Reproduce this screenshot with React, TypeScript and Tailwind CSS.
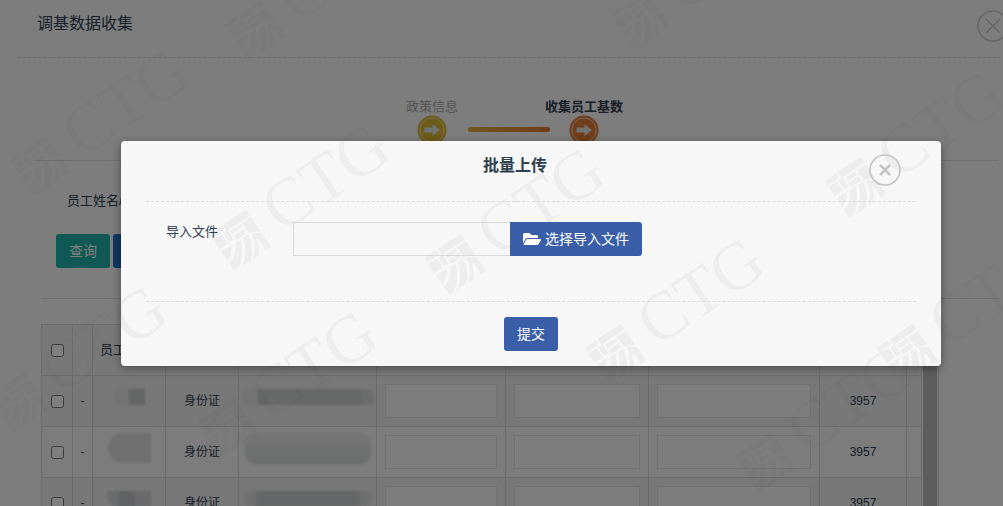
import { FaFolderOpen } from "react-icons/fa";

interface Row {
  name: string[];
  idNumber: string[];
  idType: string;
  base: string;
}

const rows: Row[] = [
  {
    name: ["w-4 h-4 bg-[#e6e6e6] rounded-l-lg", "w-4 h-4 bg-[#c9cacb]"],
    idNumber: ["w-4 h-4 bg-[#e6e6e6] rounded-l-lg", "w-[104px] h-4 bg-[#cfd0d1]", "w-3 h-4 bg-[#dadbdb] rounded-tr-lg"],
    idType: "身份证",
    base: "3957",
  },
  {
    name: ["w-[43px] h-[30px] bg-[#e1e1e1] rounded-l-2xl"],
    idNumber: ["w-[126px] h-8 bg-linear-to-b from-[#eeeeee] via-[#e0e1e1] to-[#dadbdb] rounded-xl"],
    idType: "身份证",
    base: "3957",
  },
  {
    name: ["w-3 h-4 bg-[#d6d6d6] rounded-bl-xl", "w-4 h-4 bg-[#c2c5c8]", "w-4 h-4 bg-[#d4d4d4]"],
    idNumber: ["w-3 h-4 bg-[#e0e0e0] rounded-l-lg", "w-[104px] h-4 bg-[#cbcdce]", "w-3 h-4 bg-[#dedede] rounded-r-lg"],
    idType: "身份证",
    base: "3957",
  },
];

const marks = [
  [240, 240],
  [455, 264],
  [615, 354],
  [855, 187],
  [907, 354],
  [18, 402],
  [228, 427],
  [765, 462],
  [255, 30],
  [40, 165],
  [640, 20],
];

function CloseIcon({ thick }: { thick?: boolean }) {
  return (
    <svg viewBox="0 0 32 32" className="size-8" fill="none" stroke="currentColor">
      <circle cx="16" cy="16" r="15" strokeWidth="1.5" />
      {thick ? (
        <path d="M11 11l10 10M21 11L11 21" strokeWidth="2.5" />
      ) : (
        <path d="M9 9l14 14M23 9L9 23" strokeWidth="1.5" />
      )}
    </svg>
  );
}

function StepIcon({ color }: { color: string }) {
  return (
    <svg viewBox="0 0 30 30" className="size-[30px]">
      <circle cx="15" cy="15" r="14.5" fill={color} />
      <circle cx="15" cy="15" r="12" fill="none" stroke="#e6d9b4" strokeWidth="1" />
      <path d="M7.500 12.500h8V9l7.500 6-7.500 6v-3.500h-8z" fill="#e4e4e4" />
    </svg>
  );
}

function Watermark({ viewBox }: { viewBox?: string }) {
  return (
    <svg
      viewBox={viewBox}
      className={`pointer-events-none absolute inset-0 size-full ${viewBox ? "opacity-[0.035]" : "opacity-[0.014]"}`}
      aria-hidden="true"
    >
      {marks.map(([x, y]) => (
        <g key={`${x}-${y}`} transform={`translate(${x} ${y}) rotate(-34)`}>
          <path d="M-22 -22H-8V-17H-22zM-22 -15H-12V-4H-22zM-10 -15H-5V-4H-10zM-6 -22H22V-15H-6zM-3 -13H9V-9H-3zM-3 -7H9V-2H-3zM11 -13H22V4L11 -1z" />
          <path d="M-22 -1H-9Q-14 7 -22 10zM-6 0H1Q-6 17 -18 23L-22 21V13Q-10 10 -6 0zM4 0H10Q7 16 -3 23H-13Q0 14 4 0zM13 1L22 6V23H15Q18 15 14 8Q12 18 7 23H0Q12 14 13 1z" />
          <text x="38" y="18" fontSize="68" fontFamily="Liberation Serif, serif">
            CTG
          </text>
        </g>
      ))}
    </svg>
  );
}

function UploadDialog() {
  return (
    <div
      role="dialog"
      aria-labelledby="upload-title"
      className="relative mx-auto w-full max-w-[820px] rounded bg-[#f7f7f7] shadow-[0_2px_8px_rgba(0,0,0,0.4)]"
    >
      <Watermark viewBox="121 141 820 225" />
      <div className="relative px-[25px] pb-[15px]">
        <header className="flex h-[61px] justify-center border-b border-dashed border-[#dcdcdc] pt-[13px] pr-8">
          <h2 id="upload-title" className="text-base leading-6 font-bold text-[#2f4050]">
            批量上传
          </h2>
          <button type="button" aria-label="关闭" className="absolute top-[13px] right-10 rounded-full text-[#c4c4c4]">
            <CloseIcon thick />
          </button>
        </header>
        <div className="flex h-[100px] border-b border-dashed border-[#dcdcdc] pt-5 pl-5">
          <label htmlFor="import-file" className="w-[127px] text-[13px] leading-5 text-[#2f4050]">
            导入文件
          </label>
          <input
            id="import-file"
            type="text"
            readOnly
            className="h-[34px] w-[217px] border border-r-0 border-[#dadada] bg-transparent px-3 text-sm outline-none"
          />
          <button
            type="button"
            className="flex h-[34px] w-[132px] items-center justify-center gap-1 rounded-r-[3px] bg-[#3a5ea8] text-sm whitespace-nowrap text-white"
          >
            <FaFolderOpen className="size-[18px]" />
            选择导入文件
          </button>
        </div>
        <footer className="flex justify-center pt-[15px]">
          <button type="button" className="h-[34px] w-[54px] rounded-[3px] bg-[#3a5ea8] text-sm text-white">
            提交
          </button>
        </footer>
      </div>
    </div>
  );
}

export default function App() {
  return (
    <div className="relative h-screen overflow-hidden bg-[#fafafa] font-['Liberation_Sans','Noto_Sans_CJK_SC',sans-serif] text-[13px] text-[#2f4050]">
      {/* Page */}
      <div className="-mr-[58px] pl-[18px]">
        <header className="flex h-[58px] justify-between border-b border-dashed border-[#dcdcdc] pt-[10px] pr-[52px] pl-[19px]">
          <h1 className="text-base leading-7">调基数据收集</h1>
          <button type="button" aria-label="关闭页面" className="h-8 text-[#cccccc]">
            <CloseIcon />
          </button>
        </header>

        {/* Steps */}
        <ol className="mr-[62px] ml-[15px] flex h-[103px] justify-center border-b border-[#dedede] pt-10 pr-4">
          <li className="flex w-[78px] flex-col items-center leading-[17px] text-[#a8a8a8]">
            政策信息
            <StepIcon color="#dcb932" />
          </li>
          <li className="mt-[29px] mr-[-5px] ml-[-3px] h-[5px] w-[82px] rounded-full bg-linear-to-r from-[#dcb03c] to-[#e07a34]" />
          <li className="flex w-[78px] flex-col items-center leading-[17px] font-bold">
            <span className="whitespace-nowrap">收集员工基数</span>
            <StepIcon color="#e27a34" />
          </li>
        </ol>

        {/* Filters */}
        <section className="mr-[62px] ml-[23px] h-[138px] border-b border-[#dedede] pt-[30px] pl-[15px]">
          <p className="mb-[23px] pl-[11px] leading-5">员工姓名/</p>
          <div className="flex gap-[3px]">
            <button type="button" className="h-[34px] w-[54px] rounded-[3px] bg-[#20b0a8] text-sm text-white">
              查询
            </button>
            <button type="button" className="h-[34px] w-[54px] rounded-[3px] bg-[#1c70c4] text-sm text-white">
              重置
            </button>
          </div>
        </section>

        {/* Employee table */}
        <div className="mt-[25px] ml-[23px] flex max-w-[898px] border-r border-[#d4d4d4]">
          <table className="w-[881px] table-fixed border-collapse text-center text-xs">
            <colgroup>
              <col className="w-[31px]" />
              <col className="w-5" />
              <col className="w-[73px]" />
              <col className="w-[73px]" />
              <col className="w-[138px]" />
              <col className="w-[129px]" />
              <col className="w-[143px]" />
              <col className="w-[171px]" />
              <col className="w-[87px]" />
              <col />
            </colgroup>
            <thead>
              <tr className="h-[51px] bg-[#f1f1f2] [&>th]:border [&>th]:border-[#d8d8d8]">
                <th>
                  <input type="checkbox" aria-label="全选" className="mx-auto block size-[13px]" />
                </th>
                <th />
                <th className="pl-[7px] text-left text-[13px] font-normal">员工姓名</th>
                <th />
                <th />
                <th />
                <th />
                <th />
                <th />
                <th />
              </tr>
            </thead>
            <tbody>
              {rows.map((row, i) => (
                <tr
                  key={i}
                  className="h-[51px] odd:bg-[#f0f0f0] even:bg-[#f8f8f8] [&>td]:border [&>td]:border-[#d8d8d8]"
                >
                  <td>
                    <input type="checkbox" aria-label={`选择第${i + 1}行`} className="mx-auto block size-[13px]" />
                  </td>
                  <td>-</td>
                  <td>
                    <div className="-mt-2 flex justify-center blur-[1px]">
                      {row.name.map((block, j) => (
                        <span key={j} className={block} />
                      ))}
                    </div>
                  </td>
                  <td>{row.idType}</td>
                  <td>
                    <div className="-mt-2 flex justify-center blur-[1px]">
                      {row.idNumber.map((block, j) => (
                        <span key={j} className={block} />
                      ))}
                    </div>
                  </td>
                  {["缴费基数", "申报基数", "备注"].map((label) => (
                    <td key={label} className="px-2">
                      <input
                        type="text"
                        aria-label={label}
                        className="block h-[34px] w-full border border-[#e2e2e2] bg-[#fafafa] px-2"
                      />
                    </td>
                  ))}
                  <td>{row.base}</td>
                  <td />
                </tr>
              ))}
            </tbody>
          </table>
          <div className="ml-px w-[14px] bg-[#bababa]" />
        </div>
      </div>
      <Watermark />

      {/* Dialog layer */}
      <div className="absolute inset-0 bg-black/50">
        <div className="-mr-[59px] pt-[141px]">
          <UploadDialog />
        </div>
      </div>
    </div>
  );
}
